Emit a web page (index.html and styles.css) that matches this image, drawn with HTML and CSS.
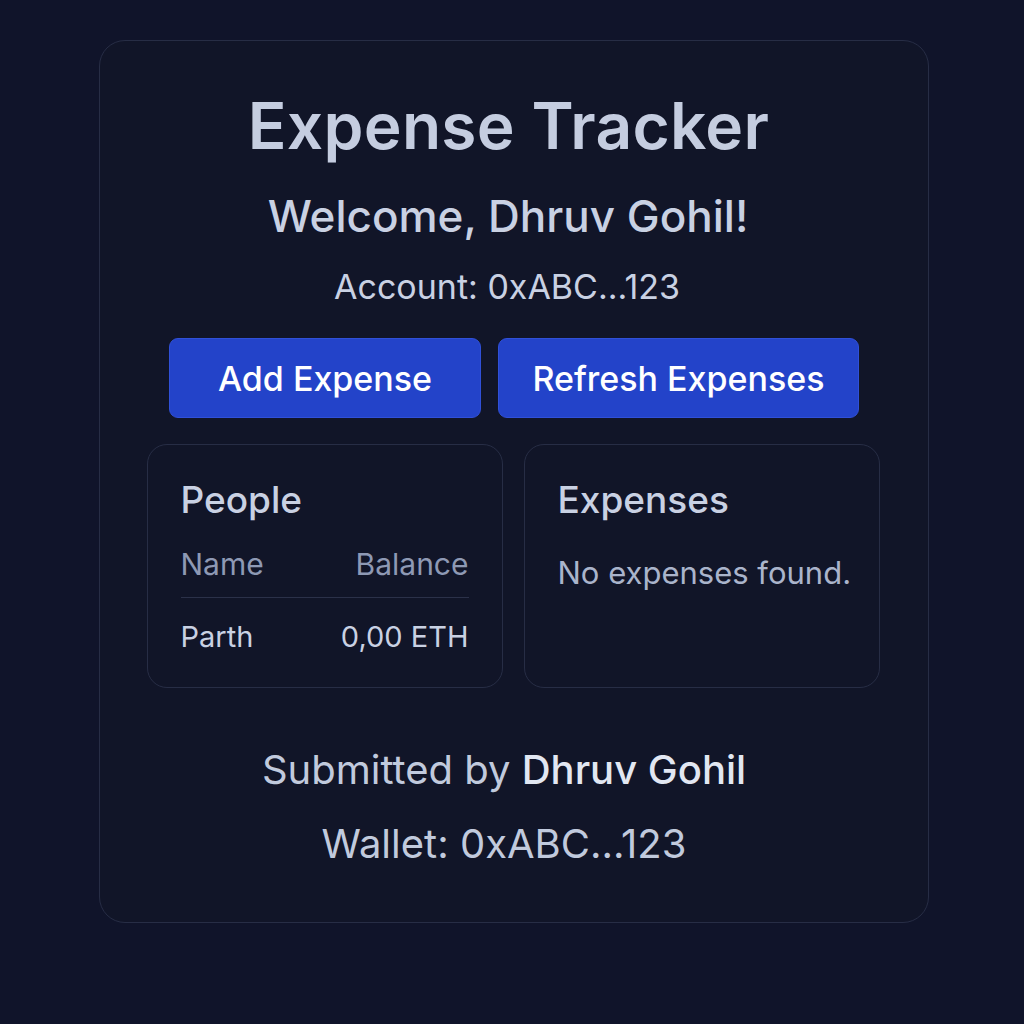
FILE: index.html
```html
<!DOCTYPE html>
<html lang="en">
<head>
<meta charset="utf-8">
<title>Expense Tracker</title>
<link rel="stylesheet" href="styles.css">
</head>
<body>
<main class="card">
  <h1 class="title">Expense Tracker</h1>
  <h2 class="welcome">Welcome, Dhruv Gohil!</h2>
  <p class="account">Account: 0xABC...123</p>
  <div class="actions">
    <button class="btn btn-add">Add Expense</button>
    <button class="btn btn-refresh">Refresh Expenses</button>
  </div>
  <div class="panels">
    <section class="panel">
      <h3 class="panel-title">People</h3>
      <div class="row row-head"><span>Name</span><span>Balance</span></div>
      <div class="row row-body"><span>Parth</span><span>0,00 ETH</span></div>
    </section>
    <section class="panel">
      <h3 class="panel-title">Expenses</h3>
      <p class="empty">No expenses found.</p>
    </section>
  </div>
  <footer class="footer">
    <p class="submitted">Submitted by <strong>Dhruv Gohil</strong></p>
    <p class="wallet">Wallet: 0xABC...123</p>
  </footer>
</main>
</body>
</html>
```
FILE: styles.css
```css
* { box-sizing: border-box; }
html, body { margin: 0; padding: 0; }
body {
  background: #10142a;
  font-family: Inter, "Noto Sans", "Liberation Sans", sans-serif;
  color: #c9d1e3;
  width: 1024px;
  height: 1024px;
  overflow: hidden;
}
.card {
  width: 830px;
  height: 883px;
  margin: 40px 0 0 99px;
  border: 1px solid #272d45;
  border-radius: 26px;
  background: #111528;
  display: flex;
  flex-direction: column;
  align-items: center;
  padding-top: 46px;
}
.title {
  margin: 0;
  padding-right: 11px;
  font-size: 64px;
  font-weight: 600;
  line-height: 78px;
  color: #c5cde0;
  letter-spacing: 0.3px;
}
.welcome {
  margin: 24px 0 0;
  padding-right: 12px;
  font-size: 44px;
  font-weight: 500;
  line-height: 54px;
  color: #c9d1e3;
}
.account {
  margin: 22px 0 0;
  padding-right: 14px;
  font-size: 34px;
  line-height: 44px;
  color: #c9d1e3;
}
.actions {
  display: flex;
  gap: 17px;
  margin-top: 29px;
}
.btn {
  height: 80px;
  border: 1px solid #3050d8;
  border-radius: 9px;
  background: #2343c9;
  color: #ffffff;
  font-family: inherit;
  font-size: 34px;
  font-weight: 500;
  padding: 0 20px;
}
.btn-add { width: 312px; }
.btn-refresh { width: 361px; }
.panels {
  display: flex;
  gap: 21px;
  margin-top: 26px;
  margin-right: 2px;
}
.panel {
  width: 356px;
  height: 244px;
  border: 1px solid #272d45;
  border-radius: 20px;
  padding: 33px 33px 0 33px;
}
.panel-title {
  margin: 0;
  font-size: 37px;
  font-weight: 500;
  line-height: 44px;
  color: #c9d1e3;
}
.row {
  display: flex;
  justify-content: space-between;
  line-height: 36px;
}
.row-head {
  margin-top: 24px;
  font-size: 30px;
  color: #8e99b4;
  padding-bottom: 15px;
  border-bottom: 1px solid #2b3149;
}
.row-body {
  margin-top: 21px;
  font-size: 29px;
  color: #c9d1e3;
}
.empty {
  margin: 32px -20px 0 0;
  white-space: nowrap;
  font-size: 31px;
  line-height: 38px;
  color: #aab4cb;
}
.footer {
  margin-top: 57px;
  padding-right: 20px;
  display: flex;
  flex-direction: column;
  align-items: center;
}
.submitted, .wallet {
  margin: 0;
  font-size: 40px;
  line-height: 50px;
  color: #c1cadd;
}
.submitted strong {
  font-weight: 500;
  color: #e2e7f2;
}
.wallet { margin-top: 24px; }
```
